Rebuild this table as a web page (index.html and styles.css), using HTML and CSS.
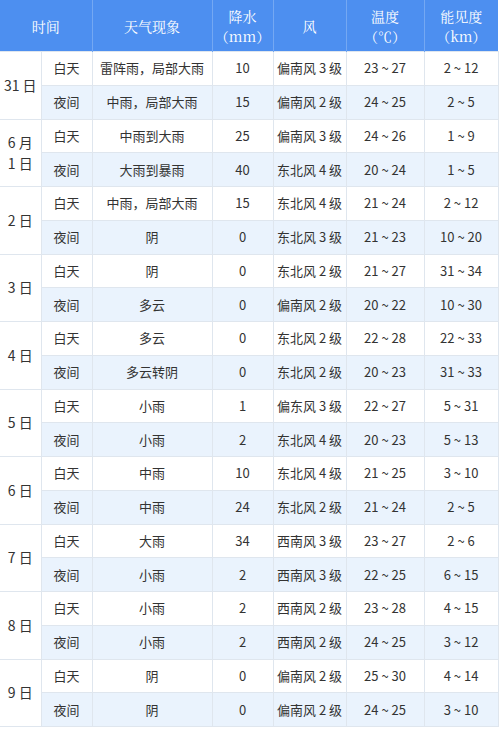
FILE: index.html
```html
<!DOCTYPE html>
<html lang="zh">
<head>
<meta charset="utf-8">
<link rel="stylesheet" href="styles.css">
</head>
<body>
<table class="wx">
  <colgroup>
    <col class="c-date"><col class="c-half"><col class="c-desc"><col class="c-rain"><col class="c-wind"><col class="c-temp"><col class="c-vis">
  </colgroup>
  <thead>
    <tr>
      <th colspan="2">时间</th>
      <th>天气现象</th>
      <th>降水<br>（mm）</th>
      <th>风</th>
      <th>温度<br>（℃）</th>
      <th>能见度<br>（km）</th>
    </tr>
  </thead>
  <tbody>
    <tr class="day"><td rowspan="2" class="date">31 日</td><td>白天</td><td>雷阵雨，局部大雨</td><td>10</td><td>偏南风 3 级</td><td>23 ~ 27</td><td>2 ~ 12</td></tr>
    <tr class="night"><td>夜间</td><td>中雨，局部大雨</td><td>15</td><td>偏南风 2 级</td><td>24 ~ 25</td><td>2 ~ 5</td></tr>
    <tr class="day"><td rowspan="2" class="date">6 月<br>1 日</td><td>白天</td><td>中雨到大雨</td><td>25</td><td>偏南风 3 级</td><td>24 ~ 26</td><td>1 ~ 9</td></tr>
    <tr class="night"><td>夜间</td><td>大雨到暴雨</td><td>40</td><td>东北风 4 级</td><td>20 ~ 24</td><td>1 ~ 5</td></tr>
    <tr class="day"><td rowspan="2" class="date">2 日</td><td>白天</td><td>中雨，局部大雨</td><td>15</td><td>东北风 4 级</td><td>21 ~ 24</td><td>2 ~ 12</td></tr>
    <tr class="night"><td>夜间</td><td>阴</td><td>0</td><td>东北风 3 级</td><td>21 ~ 23</td><td>10 ~ 20</td></tr>
    <tr class="day"><td rowspan="2" class="date">3 日</td><td>白天</td><td>阴</td><td>0</td><td>东北风 2 级</td><td>21 ~ 27</td><td>31 ~ 34</td></tr>
    <tr class="night"><td>夜间</td><td>多云</td><td>0</td><td>偏南风 2 级</td><td>20 ~ 22</td><td>10 ~ 30</td></tr>
    <tr class="day"><td rowspan="2" class="date">4 日</td><td>白天</td><td>多云</td><td>0</td><td>东北风 2 级</td><td>22 ~ 28</td><td>22 ~ 33</td></tr>
    <tr class="night"><td>夜间</td><td>多云转阴</td><td>0</td><td>东北风 2 级</td><td>20 ~ 23</td><td>31 ~ 33</td></tr>
    <tr class="day"><td rowspan="2" class="date">5 日</td><td>白天</td><td>小雨</td><td>1</td><td>偏东风 3 级</td><td>22 ~ 27</td><td>5 ~ 31</td></tr>
    <tr class="night"><td>夜间</td><td>小雨</td><td>2</td><td>东北风 4 级</td><td>20 ~ 23</td><td>5 ~ 13</td></tr>
    <tr class="day"><td rowspan="2" class="date">6 日</td><td>白天</td><td>中雨</td><td>10</td><td>东北风 4 级</td><td>21 ~ 25</td><td>3 ~ 10</td></tr>
    <tr class="night"><td>夜间</td><td>中雨</td><td>24</td><td>东北风 2 级</td><td>21 ~ 24</td><td>2 ~ 5</td></tr>
    <tr class="day"><td rowspan="2" class="date">7 日</td><td>白天</td><td>大雨</td><td>34</td><td>西南风 3 级</td><td>23 ~ 27</td><td>2 ~ 6</td></tr>
    <tr class="night"><td>夜间</td><td>小雨</td><td>2</td><td>西南风 3 级</td><td>22 ~ 25</td><td>6 ~ 15</td></tr>
    <tr class="day"><td rowspan="2" class="date">8 日</td><td>白天</td><td>小雨</td><td>2</td><td>西南风 2 级</td><td>23 ~ 28</td><td>4 ~ 15</td></tr>
    <tr class="night"><td>夜间</td><td>小雨</td><td>2</td><td>西南风 2 级</td><td>24 ~ 25</td><td>3 ~ 12</td></tr>
    <tr class="day"><td rowspan="2" class="date">9 日</td><td>白天</td><td>阴</td><td>0</td><td>偏南风 2 级</td><td>25 ~ 30</td><td>4 ~ 14</td></tr>
    <tr class="night"><td>夜间</td><td>阴</td><td>0</td><td>偏南风 2 级</td><td>24 ~ 25</td><td>3 ~ 10</td></tr>
  </tbody>
</table>
</body>
</html>
```
FILE: styles.css
```css
html, body {
  margin: 0;
  padding: 0;
  background: #ffffff;
}
.wx {
  width: 498px;
  border-collapse: collapse;
  table-layout: fixed;
  font-family: "Noto Sans CJK SC", "Noto Sans", sans-serif;
  font-size: 13px;
  color: #333333;
}
.c-date { width: 41px; }
.c-half { width: 51px; }
.c-desc { width: 120px; }
.c-rain { width: 61px; }
.c-wind { width: 73px; }
.c-temp { width: 78px; }
.c-vis  { width: 74px; }
.wx th {
  height: 51px;
  padding: 0;
  background: #4d8ff0;
  color: #ffffff;
  font-family: "Noto Serif CJK SC", "Liberation Serif", serif;
  font-weight: normal;
  font-size: 14px;
  line-height: 20px;
  border-left: 1px solid #74a8f3;
  text-align: center;
  vertical-align: middle;
}
.wx th:first-child { border-left: none; }
.wx td {
  height: 32.75px;
  padding: 0;
  text-align: center;
  vertical-align: middle;
  border: 1px solid #dfe6ee;
  line-height: 18px;
  white-space: nowrap;
}
.wx td:first-child { border-left: none; }
.wx tr.night td { background: #eaf3fd; }
.wx td.date { background: #ffffff !important; font-size: 14px; line-height: 21px; }
```
